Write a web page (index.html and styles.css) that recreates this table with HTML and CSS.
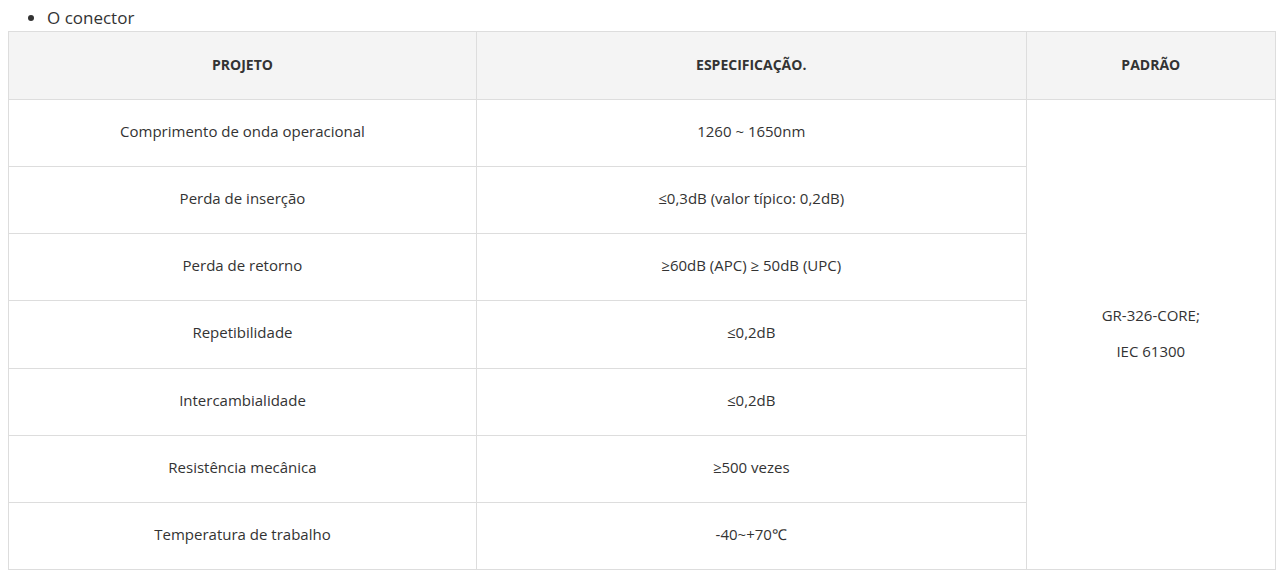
FILE: index.html
```html
<!DOCTYPE html>
<html lang="pt">
<head>
<meta charset="utf-8">
<title>O conector</title>
<link rel="stylesheet" href="styles.css">
</head>
<body>
<ul class="list">
  <li>O conector</li>
</ul>
<table class="spec">
  <thead>
    <tr>
      <th class="col1">PROJETO</th>
      <th class="col2">ESPECIFICAÇÃO.</th>
      <th class="col3">PADRÃO</th>
    </tr>
  </thead>
  <tbody>
    <tr>
      <td>Comprimento de onda operacional</td>
      <td>1260 ~ 1650nm</td>
      <td rowspan="7" class="std"><p>GR-326-CORE;</p><p>IEC 61300</p></td>
    </tr>
    <tr><td>Perda de inserção</td><td>≤0,3dB (valor típico: 0,2dB)</td></tr>
    <tr><td>Perda de retorno</td><td>≥60dB (APC) ≥ 50dB (UPC)</td></tr>
    <tr class="tall"><td>Repetibilidade</td><td>≤0,2dB</td></tr>
    <tr><td>Intercambialidade</td><td>≤0,2dB</td></tr>
    <tr><td>Resistência mecânica</td><td>≥500 vezes</td></tr>
    <tr><td>Temperatura de trabalho</td><td>-40~+70℃</td></tr>
  </tbody>
</table>
</body>
</html>
```
FILE: styles.css
```css
body {
  margin: 8px;
  font-family: "Open Sans", "Liberation Sans", sans-serif;
  color: #333;
  background: #fff;
}
.list {
  margin: 0;
  padding-left: 39px;
  font-size: 17px;
  line-height: 20px;
  padding-top: 0;
  margin-bottom: 3px;
}
.spec {
  width: 1268px;
  border-collapse: collapse;
  font-size: 15px;
  line-height: 20px;
  color: #333;
}
.spec th,
.spec td {
  border: 1px solid #dddddd;
  text-align: center;
  vertical-align: middle;
  padding: 21px 10px 25px;
  height: 20px;
}
.spec .tall td {
  padding-bottom: 26px;
}
.spec th {
  background: #f4f4f4;
  font-weight: 700;
  font-size: 14px;
  padding: 23px 10px 24px;
}
.col1 { width: 448px; }
.col2 { width: 530px; }
.col3 { width: 229px; }
.spec .std {
  padding: 0 10px 4px;
}
.std p {
  margin: 0;
  line-height: 36px;
}
```
